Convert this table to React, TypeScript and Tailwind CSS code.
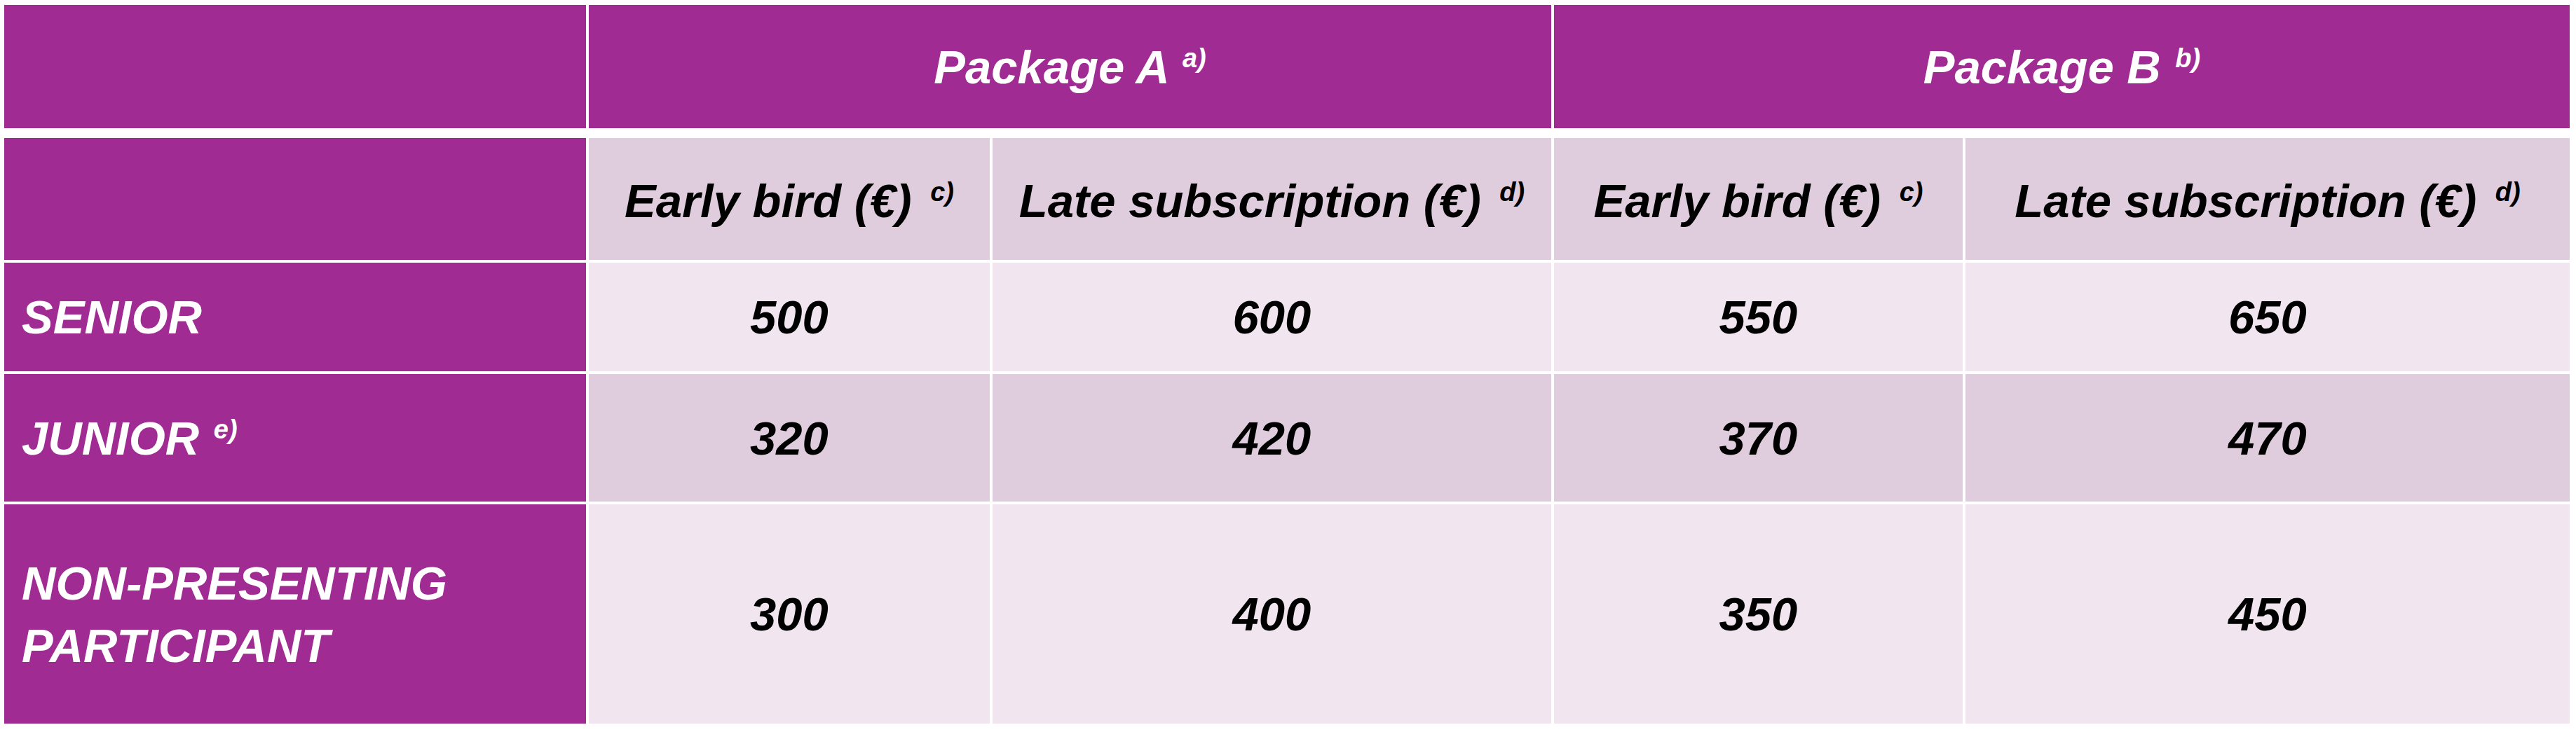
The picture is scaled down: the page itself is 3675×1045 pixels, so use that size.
const cols = "grid grid-cols-[830px_572px_797px_583px_862px] gap-x-[4px]";

const rows = [
  { label: "SENIOR", note: "", values: ["500", "600", "550", "650"], h: "h-[155px]", bg: "bg-[#f1e6ef]" },
  { label: "JUNIOR", note: "e)", values: ["320", "420", "370", "470"], h: "h-[182px]", bg: "bg-[#dfccdd]" },
  {
    label: "NON-PRESENTING PARTICIPANT",
    note: "",
    values: ["300", "400", "350", "450"],
    h: "h-[313px]",
    bg: "bg-[#f1e6ef]",
  },
];

function Note({ children, wide = false }: { children: string; wide?: boolean }) {
  return (
    <sup className={`relative top-[-23px] text-[38px] leading-none ${wide ? "ml-[8px]" : "ml-[2px]"}`}>
      {children}
    </sup>
  );
}

export default function App() {
  return (
    <div
      className="min-h-[1045px] w-[3675px] bg-white pl-[6px] pt-[7px] font-bold italic"
      style={{ fontFamily: '"Liberation Sans", Arial, sans-serif' }}
    >
      <div className={`${cols} text-[67px] leading-none text-white`}>
        <div className="h-[176px] bg-[#a02b93]" />
        <div className="col-span-2 flex h-[176px] items-center justify-center bg-[#a02b93]">
          <span>
            Package A <Note>a)</Note>
          </span>
        </div>
        <div className="col-span-2 flex h-[176px] items-center justify-center bg-[#a02b93]">
          <span>
            Package B <Note>b)</Note>
          </span>
        </div>
      </div>

      <div className={`${cols} mt-[14px] gap-y-[4px] text-[67px] leading-none`}>
        <div className="h-[174px] bg-[#a02b93]" />
        {["Early bird (€)", "Late subscription (€)", "Early bird (€)", "Late subscription (€)"].map((t, i) => (
          <div key={i} className="flex h-[174px] items-center justify-center bg-[#dfccdd] pt-[4px] text-black">
            <span>
              {t} <Note wide>{i % 2 === 0 ? "c)" : "d)"}</Note>
            </span>
          </div>
        ))}

        {rows.map((r) => (
          <div key={r.label} className="contents">
            <div className={`flex ${r.h} items-center bg-[#a02b93] pl-[25px] pr-[40px] leading-[89px] text-white`}>
              <span>
                {r.label}
                {r.note && (
                  <>
                    {" "}
                    <Note>{r.note}</Note>
                  </>
                )}
              </span>
            </div>
            {r.values.map((v, i) => (
              <div key={i} className={`flex ${r.h} items-center justify-center ${r.bg} text-black`}>
                {v}
              </div>
            ))}
          </div>
        ))}
      </div>
    </div>
  );
}
